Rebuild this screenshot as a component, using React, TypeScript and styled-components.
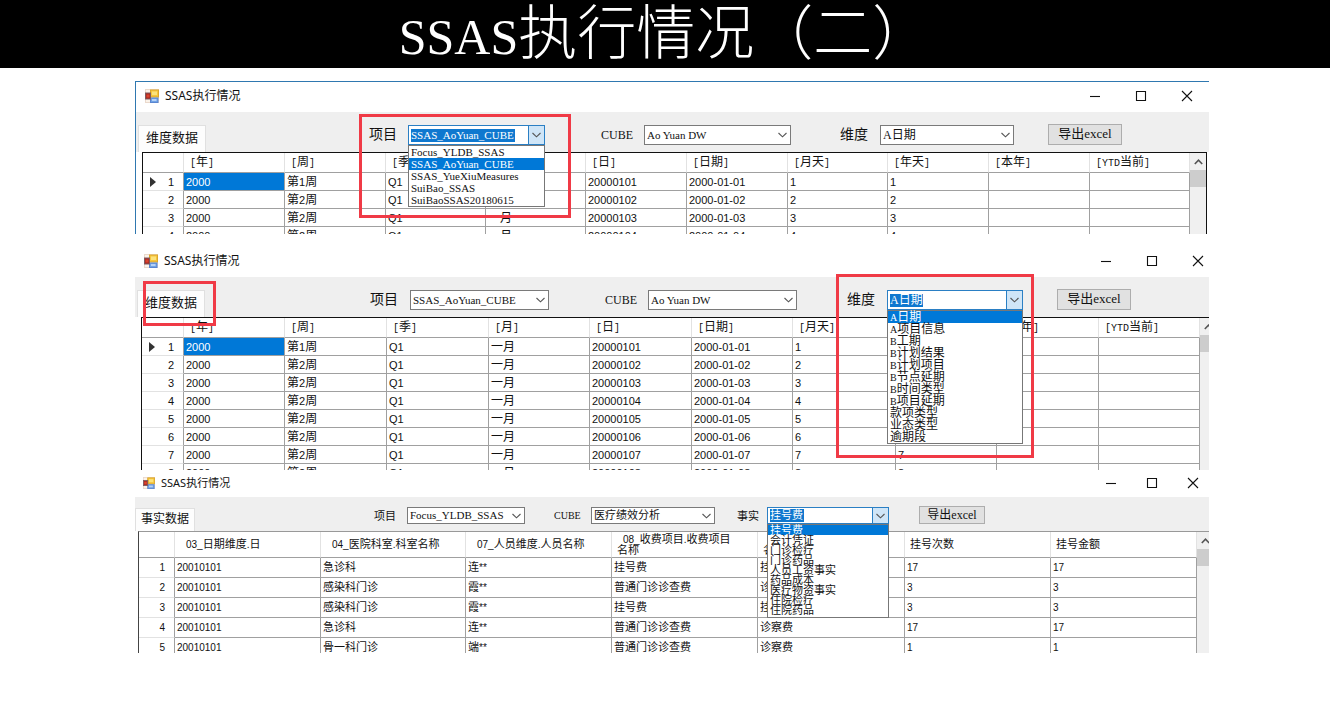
import React from "react";
import styled, { createGlobalStyle, css } from "styled-components";

const GlobalStyle = createGlobalStyle`
  *, *::before, *::after { box-sizing: border-box; }
  body {
    margin: 0;
    background: #fff;
    color: #111;
    font-family: "Liberation Sans", "Noto Sans CJK SC", sans-serif;
  }
  button, select { font: inherit; color: inherit; margin: 0; border-radius: 0; }
`;

const SANS = `"Liberation Sans", "Noto Sans CJK SC", sans-serif`;
const SERIF = `"Liberation Serif", "Noto Sans CJK SC", serif`;
const MONO = `"Liberation Mono", "Noto Sans CJK SC", monospace`;

const Banner = styled.header`
  height: 68px;
  background: #000;
  color: #fff;
  display: flex;
  justify-content: center;
`;

const BannerTitle = styled.h1`
  margin: 0;
  font: 300 59px/68px ${SERIF};
  text-spacing-trim: space-all;
  white-space: nowrap;
`;

const BannerLatin = styled.span`
  font-size: 50px;
`;

const Main = styled.main`
  margin: 13px 121px 0 135px;
  display: flex;
  flex-direction: column;
`;

const WindowFrame = styled.section<{ $framed?: boolean; $gap?: number }>`
  margin-top: ${(p) => p.$gap ?? 0}px;
  border-style: solid;
  border-color: #2f78b0;
  border-width: ${(p) => (p.$framed ? "1px 0 0 1px" : "0")};
`;

const TitleBar = styled.div<{ $h: number; $left: number; $right: number; $size: number }>`
  display: flex;
  align-items: center;
  gap: 6px;
  height: ${(p) => p.$h}px;
  padding: 0 ${(p) => p.$right}px 2px ${(p) => p.$left}px;
  font: ${(p) => p.$size}px/16px "Noto Sans", "Noto Sans CJK SC", sans-serif;
`;

const WindowTitle = styled.h2`
  margin: 0;
  flex: 1;
  font: inherit;
`;

const WindowControls = styled.div<{ $gap: number }>`
  display: flex;
  gap: ${(p) => p.$gap}px;
`;

const ControlButton = styled.button`
  width: 12px;
  height: 12px;
  padding: 0;
  border: 0;
  background: none;
  display: flex;
`;

const Toolbar = styled.div<{ $cols: string; $h: number; $top: number }>`
  display: grid;
  grid-template-columns: ${(p) => p.$cols};
  align-items: start;
  height: ${(p) => p.$h}px;
  padding-top: ${(p) => p.$top}px;
  background: #efefef;
`;

const Tab = styled.button<{ $small?: boolean; $inset: number }>`
  position: relative;
  align-self: end;
  justify-self: start;
  margin-left: ${(p) => p.$inset}px;
  height: ${(p) => (p.$small ? 23 : 27)}px;
  padding: 0 ${(p) => (p.$small ? 5 : 7)}px 2px;
  border: 1px solid #e0e0e0;
  border-bottom: 0;
  background: #fdfdfd;
  font-size: ${(p) => (p.$small ? 12 : 13)}px;
  line-height: 20px;
  white-space: nowrap;
`;

const Field = styled.div<{ $small?: boolean }>`
  position: relative;
  display: flex;
  align-items: center;
  justify-self: start;
  height: ${(p) => (p.$small ? 17 : 20)}px;
`;

const FieldLabel = styled.label<{ $w: number; $small?: boolean; $latin?: boolean }>`
  width: ${(p) => p.$w}px;
  font-family: ${SERIF};
  font-size: ${(p) => (p.$small ? (p.$latin ? 10 : 11) : p.$latin ? 12 : 14)}px;
  line-height: 16px;
  white-space: nowrap;
`;

const ComboBox = styled.div<{ $w: number }>`
  position: relative;
  width: ${(p) => p.$w}px;
  height: 100%;
`;

const Select = styled.select<{ $mark?: number; $cjk?: boolean }>`
  appearance: none;
  display: block;
  width: 100%;
  height: 100%;
  padding: 0 17px 1px 2px;
  border: 1px solid #7a7a7a;
  background: #fff;
  font-family: ${SERIF};
  font-size: ${(p) => (p.$cjk ? 12 : 11)}px;
  line-height: 14px;
  outline: 0;
  ${(p) =>
    p.$mark &&
    css`
      color: #fff;
      border-color: #2a7fc4;
      background: #fff linear-gradient(#0f78cf, #0f78cf) 2px center / ${p.$mark}px 13px no-repeat;
    `}
  option { color: #111; }
`;

const Arrow = styled.span<{ $open?: boolean }>`
  position: absolute;
  top: 0;
  right: 0;
  bottom: 0;
  width: 17px;
  display: flex;
  align-items: center;
  justify-content: center;
  pointer-events: none;
  ${(p) =>
    p.$open &&
    css`
      border: 1px solid #2a7fc4;
      background: #cfe5f7;
    `}
`;

const OptionList = styled.ul<{ $pitch: number; $cjk?: boolean }>`
  position: absolute;
  z-index: 2;
  top: 100%;
  left: 0;
  right: 0;
  margin: 0;
  padding: 0;
  list-style: none;
  border: 1px solid #777;
  background: #fff;
  font-family: ${SERIF};
  font-size: ${(p) => (p.$cjk ? (p.$pitch < 12 ? 11 : 12) : 11)}px;
  line-height: ${(p) => p.$pitch}px;
  white-space: nowrap;
  ${(p) => p.$pitch < 12 && "padding-bottom: 2px;"}
`;

const OptionItem = styled.li<{ $active?: boolean; $pitch: number }>`
  height: ${(p) => p.$pitch}px;
  padding-left: 2px;
  color: ${(p) => (p.$active ? "#fff" : "#111")};
  background: ${(p) => (p.$active ? "#0078d7" : "none")};
`;

const ExportButton = styled.button<{ $small?: boolean }>`
  && { margin-top: -1px; }
  justify-self: start;
  width: ${(p) => (p.$small ? 66 : 74)}px;
  height: ${(p) => (p.$small ? 18 : 21)}px;
  padding: 0 0 1px;
  border: 1px solid #adadad;
  background: #e1e1e1;
  font-family: ${SERIF};
  font-size: ${(p) => (p.$small ? 12 : 13)}px;
  line-height: 14px;
`;

const Marker = styled.span<{ $x: number; $y: number; $w: number; $h: number }>`
  position: absolute;
  z-index: 3;
  left: ${(p) => p.$x}px;
  top: ${(p) => p.$y}px;
  width: ${(p) => p.$w}px;
  height: ${(p) => p.$h}px;
  border: 3px solid #f03a46;
  pointer-events: none;
`;

const GridFrame = styled.div<{ $h: number; $left: number; $kind: "full" | "open" | "soft" }>`
  display: flex;
  height: ${(p) => p.$h}px;
  margin-left: ${(p) => p.$left}px;
  overflow: hidden;
  border: 0 solid #111;
  ${(p) =>
    p.$kind === "full" ? "border-width: 1px 1px 0 1px; margin-right: 2px;" : "border-width: 1px 0 0 1px;"}
  ${(p) => p.$kind === "soft" && "border-top-color: #999; border-left-color: #444;"}
`;

const Table = styled.table<{ $small?: boolean }>`
  flex: 1;
  width: 0;
  align-self: flex-start;
  table-layout: fixed;
  border-collapse: separate;
  border-spacing: 0;
  font-size: ${(p) => (p.$small ? 11 : 12)}px;
  line-height: ${(p) => (p.$small ? 11 : 16)}px;
`;

const HeadCell = styled.th<{ $small?: boolean; $indent?: boolean }>`
  height: ${(p) => (p.$small ? 26 : 20)}px;
  padding: 0 ${(p) => (p.$small ? "20px 0 5px" : "0 0 6px")};
  border-right: 1px solid #e2e2e2;
  border-bottom: 1px solid #a0a0a0;
  font-weight: 400;
  text-align: left;
  text-indent: ${(p) => (p.$indent ? 6 : 0)}px;
`;

const cell = css<{ $small?: boolean }>`
  height: ${(p) => (p.$small ? 20 : 18)}px;
  padding: 0 0 0 2px;
  border-right: 1px solid #a0a0a0;
  border-bottom: 1px solid #a0a0a0;
  font-weight: 400;
  text-align: left;
  white-space: nowrap;
`;

const Cell = styled.td<{ $small?: boolean; $active?: boolean }>`
  ${cell}
  ${(p) => p.$active && "background: #0078d7; color: #fff;"}
`;

const RowHead = styled.th<{ $small?: boolean }>`
  ${cell}
  border-bottom-color: #e2e2e2;
`;

const RowMark = styled.span`
  display: flex;
  align-items: center;
  justify-content: space-between;
  padding: 0 9px 0 5px;
`;

const Latin = styled.span<{ $size: number; $family: string }>`
  font-family: ${(p) => p.$family};
  font-size: ${(p) => p.$size}px;
`;

const ScrollBar = styled.div<{ $w: number }>`
  width: ${(p) => p.$w}px;
  background: #f0f0f0;
  overflow: hidden;
`;

const ScrollArrow = styled.div`
  width: 16px;
  height: 17px;
  display: flex;
  align-items: center;
  justify-content: center;
`;

const ScrollThumb = styled.div`
  height: 17px;
  background: #cdcdcd;
`;

/* Latin runs are set smaller than the Chinese characters around them. */
function Mixed({ text, size, family = SANS }: { text: string; size: number; family?: string }) {
  return (
    <>
      {text.split(/([\x20-\x7e]+)/).map((part, i) =>
        i % 2 ? (
          <Latin key={i} $size={size} $family={family}>
            {part}
          </Latin>
        ) : (
          part
        ),
      )}
    </>
  );
}

function FormIcon({ size }: { size: number }) {
  return (
    <svg width={size} height={size} viewBox="0 0 14 14" aria-hidden="true">
      <rect x="0.5" y="0.5" width="13" height="13" fill="#fbf3ea" stroke="#ead9cc" />
      <rect x="5.5" y="1" width="8" height="7" fill="#f6c63c" stroke="#dba62c" />
      <rect x="7" y="2.5" width="5" height="3.5" fill="#fbe27c" />
      <rect x="5.5" y="9" width="7.5" height="4.5" fill="#6fa2e6" stroke="#5a86d0" />
      <rect x="7" y="10" width="4.5" height="2" fill="#b5d1f6" />
      <rect x="0.5" y="4" width="5" height="6" fill="#a8261e" stroke="#7d5a60" />
      <rect x="1.5" y="5.5" width="3" height="3" fill="#d9432e" />
    </svg>
  );
}

function Chevron({ up }: { up?: boolean }) {
  return (
    <svg width="9" height="6" viewBox="0 0 9 6" fill="none" stroke="#555" strokeWidth={up ? 1.6 : 1.1} aria-hidden="true">
      <path d={up ? "M0.8 5 4.5 1.2 8.2 5" : "M0.5 1 4.5 4.8 8.5 1"} />
    </svg>
  );
}

function Controls({ gap }: { gap: number }) {
  const shapes = [
    ["最小化", "M1 6.5H11"],
    ["最大化", "M1.5 1.5H10.5V10.5H1.5Z"],
    ["关闭", "M1 1 11 11M11 1 1 11"],
  ];
  return (
    <WindowControls $gap={gap}>
      {shapes.map(([name, d]) => (
        <ControlButton key={name} aria-label={name}>
          <svg width="12" height="12" fill="none" stroke="#111" strokeWidth="1.1">
            <path d={d} />
          </svg>
        </ControlButton>
      ))}
    </WindowControls>
  );
}

type Combo = {
  label: string;
  labelWidth: number;
  width: number;
  value: string;
  options?: string[];
  mark?: number;
  marker?: [number, number, number, number];
};

type WindowData = {
  id: string;
  small?: boolean;
  framed?: boolean;
  gap?: number;
  title: { h: number; left: number; right: number; gap: number };
  toolbar: { cols: string; h: number; top: number };
  tab: string;
  tabInset: number;
  tabMarker?: [number, number, number, number];
  combos: Combo[];
  grid: { h: number; left: number; kind: "full" | "open" | "soft"; scroll: number };
  widths: number[];
  heads: string[];
  rows: string[][];
};

const hasCjk = (s: string) => /[^\x00-\x7f]/.test(s);

const weekRows = (count: number) =>
  Array.from({ length: count }, (_, i) => {
    const n = i + 1;
    return ["2000", n === 1 ? "第1周" : "第2周", "Q1", "一月", `2000010${n}`, `2000-01-0${n}`, `${n}`, `${n}`, "", ""];
  });

const dateHeads = ["[年]", "[周]", "[季]", "[月]", "[日]", "[日期]", "[月天]", "[年天]", "[本年]", "[YTD当前]"];

const windows: WindowData[] = [
  {
    id: "project",
    framed: true,
    title: { h: 30, left: 9, right: 16, gap: 34 },
    toolbar: { cols: "233fr 232fr 239fr 208fr 161fr", h: 40, top: 13 },
    tab: "维度数据",
    tabInset: 2,
    combos: [
      {
        label: "项目",
        labelWidth: 39,
        width: 137,
        value: "SSAS_AoYuan_CUBE",
        mark: 104,
        options: ["Focus_YLDB_SSAS", "SSAS_AoYuan_CUBE", "SSAS_YueXiuMeasures", "SuiBao_SSAS", "SuiBaoSSAS20180615"],
        marker: [-10, -11, 212, 104],
      },
      { label: "CUBE", labelWidth: 43, width: 147, value: "Ao Yuan DW" },
      { label: "维度", labelWidth: 40, width: 134, value: "A日期" },
    ],
    grid: { h: 82, left: 6, kind: "full", scroll: 16 },
    widths: [41, 101, 101, 100, 100, 101, 101, 100, 101, 101, 100],
    heads: dateHeads,
    rows: weekRows(4),
  },
  {
    id: "dimension",
    gap: 12,
    title: { h: 31, left: 9, right: 5, gap: 34 },
    toolbar: { cols: "235fr 235fr 242fr 210fr 152fr", h: 40, top: 13 },
    tab: "维度数据",
    tabInset: 2,
    tabMarker: [5, -10, 73, 45],
    combos: [
      { label: "项目", labelWidth: 40, width: 139, value: "SSAS_AoYuan_CUBE" },
      { label: "CUBE", labelWidth: 43, width: 149, value: "Ao Yuan DW" },
      {
        label: "维度",
        labelWidth: 40,
        width: 136,
        value: "A日期",
        mark: 33,
        options: [
          "A日期",
          "A项目信息",
          "B工期",
          "B计划结果",
          "B计划项目",
          "B节点延期",
          "B时间类型",
          "B项目延期",
          "款项类型",
          "业态类型",
          "逾期段",
        ],
        marker: [-11, -16, 198, 184],
      },
    ],
    grid: { h: 153, left: 6, kind: "open", scroll: 9 },
    widths: [42, 101, 102, 102, 101, 102, 101, 103, 101, 102, 101],
    heads: dateHeads,
    rows: weekRows(8),
  },
  {
    id: "fact",
    small: true,
    title: { h: 27, left: 8, right: 10, gap: 29 },
    toolbar: { cols: "239fr 180fr 183fr 182fr 290fr", h: 34, top: 10 },
    tab: "事实数据",
    tabInset: 0,
    combos: [
      { label: "项目", labelWidth: 33, width: 118, value: "Focus_YLDB_SSAS" },
      { label: "CUBE", labelWidth: 37, width: 124, value: "医疗绩效分析" },
      {
        label: "事实",
        labelWidth: 30,
        width: 122,
        value: "挂号费",
        mark: 34,
        options: [
          "挂号费",
          "会计凭证",
          "门诊检疗",
          "门诊药品",
          "人员工资事实",
          "药品成本",
          "医疗物资事实",
          "住院检疗",
          "住院药品",
        ],
      },
    ],
    grid: { h: 122, left: 3, kind: "soft", scroll: 12 },
    widths: [36, 146, 145, 146, 146, 147, 146, 146],
    heads: [
      "03_日期维度.日",
      "04_医院科室.科室名称",
      "07_人员维度.人员名称",
      "08_收费项目.收费项目名称",
      "09_收费类别.收费类别名称",
      "挂号次数",
      "挂号金额",
    ],
    rows: [
      ["20010101", "急诊科", "连**", "挂号费", "挂号费", "17", "17"],
      ["20010101", "感染科门诊", "霞**", "普通门诊诊查费", "诊察费", "3", "3"],
      ["20010101", "感染科门诊", "霞**", "挂号费", "挂号费", "3", "3"],
      ["20010101", "急诊科", "连**", "普通门诊诊查费", "诊察费", "17", "17"],
      ["20010101", "骨一科门诊", "端**", "普通门诊诊查费", "诊察费", "1", "1"],
    ],
  },
];

function ComboField({ combo, id, small }: { combo: Combo; id: string; small?: boolean }) {
  const { label, labelWidth, width, value, options, mark, marker } = combo;
  const cjk = hasCjk(value);
  const pitch = small ? 10 : 12;
  return (
    <Field $small={small}>
      <FieldLabel htmlFor={id} $w={labelWidth} $small={small} $latin={!hasCjk(label)}>
        {label}
      </FieldLabel>
      <ComboBox $w={width}>
        <Select id={id} defaultValue={value} $mark={mark} $cjk={cjk && !small}>
          {(options ?? [value]).map((o) => (
            <option key={o}>{o}</option>
          ))}
        </Select>
        <Arrow $open={!!options}>
          <Chevron />
        </Arrow>
        {options && (
          <OptionList role="listbox" aria-label={label} $pitch={pitch} $cjk={cjk}>
            {options.map((o) => (
              <OptionItem key={o} role="option" aria-selected={o === value} $active={o === value} $pitch={pitch}>
                <Mixed text={o} size={cjk ? 10 : 11} family={SERIF} />
              </OptionItem>
            ))}
          </OptionList>
        )}
      </ComboBox>
      {marker && <Marker $x={marker[0]} $y={marker[1]} $w={marker[2]} $h={marker[3]} />}
    </Field>
  );
}

function AppWindow({ data }: { data: WindowData }) {
  const { small, title, toolbar, grid, tabMarker } = data;
  const latinSize = small ? 10 : 11;
  return (
    <WindowFrame $framed={data.framed} $gap={data.gap}>
      <TitleBar $h={title.h} $left={title.left} $right={title.right} $size={small ? 11 : 12}>
        <FormIcon size={small ? 12 : 14} />
        <WindowTitle>SSAS执行情况</WindowTitle>
        <Controls gap={title.gap} />
      </TitleBar>
      <Toolbar $cols={toolbar.cols} $h={toolbar.h} $top={toolbar.top}>
        <Tab $small={small} $inset={data.tabInset}>
          {data.tab}
          {tabMarker && <Marker $x={tabMarker[0]} $y={tabMarker[1]} $w={tabMarker[2]} $h={tabMarker[3]} />}
        </Tab>
        {data.combos.map((c, i) => (
          <ComboField key={c.label} combo={c} id={`${data.id}-${i}`} small={small} />
        ))}
        <ExportButton $small={small}>导出excel</ExportButton>
      </Toolbar>
      <GridFrame $h={grid.h} $left={grid.left} $kind={grid.kind}>
        <Table $small={small}>
          <colgroup>
            {data.widths.map((w, i) => (
              <col key={i} width={w} />
            ))}
          </colgroup>
          <thead>
            <tr>
              <HeadCell $small={small} />
              {data.heads.map((h) => (
                <HeadCell key={h} scope="col" $small={small} $indent={small && h.includes("_")}>
                  <Mixed text={h} size={10} family={small ? SANS : MONO} />
                </HeadCell>
              ))}
            </tr>
          </thead>
          <tbody>
            {data.rows.map((row, r) => (
              <tr key={r}>
                <RowHead scope="row" $small={small}>
                  <RowMark>
                    <svg width="6" height="10" aria-hidden="true">
                      {!small && r === 0 && <path d="M0 0 6 5 0 10Z" fill="#333" />}
                    </svg>
                    <Latin $size={latinSize} $family={SANS}>
                      {r + 1}
                    </Latin>
                  </RowMark>
                </RowHead>
                {row.map((value, c) => (
                  <Cell key={c} $small={small} $active={!small && r === 0 && c === 0}>
                    <Mixed text={value} size={latinSize} />
                  </Cell>
                ))}
              </tr>
            ))}
          </tbody>
        </Table>
        <ScrollBar $w={grid.scroll}>
          <ScrollArrow>
            <Chevron up />
          </ScrollArrow>
          <ScrollThumb />
        </ScrollBar>
      </GridFrame>
    </WindowFrame>
  );
}

export default function App() {
  return (
    <>
      <GlobalStyle />
      <Banner>
        <BannerTitle>
          <BannerLatin>SSAS</BannerLatin>执行情况（二）
        </BannerTitle>
      </Banner>
      <Main>
        {windows.map((w) => (
          <AppWindow key={w.id} data={w} />
        ))}
      </Main>
    </>
  );
}
